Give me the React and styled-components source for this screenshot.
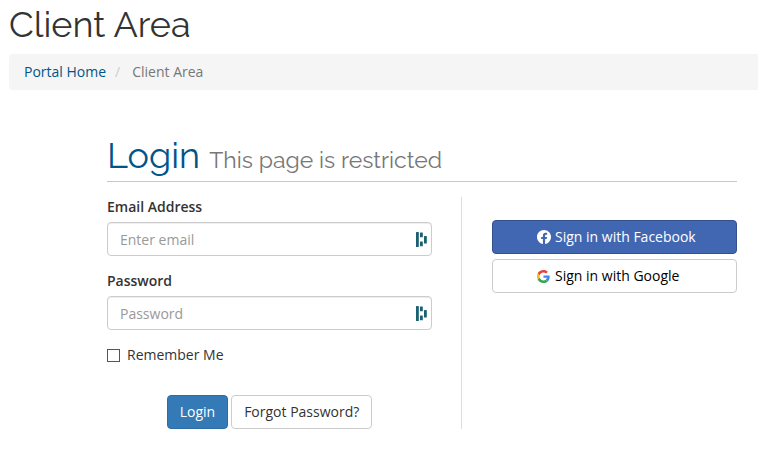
import React, { useState } from 'react';
import styled, { createGlobalStyle, css } from 'styled-components';

const GlobalStyle = createGlobalStyle`
  * {
    box-sizing: border-box;
  }

  body {
    margin: 0;
    background: #fff;
    color: #333;
    font-family: 'Open Sans', 'Noto Sans', sans-serif;
    font-size: 14px;
    line-height: 20px;
  }
`;

const Page = styled.div`
  padding: 4px 0 20px 9px;
`;

const headingFont = css`
  margin: 0;
  font-family: Raleway, Lato, sans-serif;
  font-size: 36px;
  font-weight: 400;
  line-height: 40px;
`;

const PageTitle = styled.h1`
  ${headingFont}
  margin-bottom: 10px;
`;

const Breadcrumb = styled.ol`
  display: flex;
  margin: 0;
  padding: 8px 15px;
  list-style: none;
  background: #f5f5f5;
  border-radius: 4px 0 0 4px;
`;

const Crumb = styled.li`
  color: #777;

  & + &::before {
    content: '/';
    padding: 0 12px 0 9px;
    color: #ccc;
  }

  a {
    color: #058;
    text-decoration: none;
  }
`;

const Content = styled.main`
  margin: 45px 21px 0 98px;
`;

const LoginHeader = styled.header`
  padding-bottom: 6px;
  margin-bottom: 15px;
  border-bottom: 1px solid #c8c8c8;
`;

const LoginTitle = styled.h2`
  ${headingFont}
  color: #058;

  small {
    color: #777;
    font-size: 23px;
    line-height: 23px;
  }
`;

const Columns = styled.div`
  display: flex;
`;

const Form = styled.form`
  flex: 1;
  padding-right: 29px;
  border-right: 1px solid #ddd;
`;

const FormGroup = styled.div`
  margin-bottom: 15px;
`;

const Label = styled.label`
  display: block;
  margin-bottom: 5px;
  font-weight: 600;
`;

const InputGroup = styled.div`
  display: flex;
  align-items: center;
  height: 34px;
  padding-right: 4px;
  border: 1px solid #ccc;
  border-radius: 4px;
  box-shadow: inset 0 1px 1px rgba(0, 0, 0, 0.075);

  &:focus-within {
    border-color: #66afe9;
  }
`;

const Input = styled.input`
  flex: 1;
  min-width: 0;
  padding: 7px 12px 5px;
  border: none;
  outline: none;
  background: transparent;
  color: #555;
  font: inherit;

  &::placeholder {
    color: #999;
    opacity: 1;
  }
`;

const CheckboxLabel = styled.label`
  display: flex;
  align-items: center;
  gap: 7px;
  width: fit-content;
`;

const Checkbox = styled.input`
  appearance: none;
  width: 13px;
  height: 13px;
  margin: 0;
  border: 1px solid #555;
  background: #fff;

  &:checked {
    background: #337ab7;
  }
`;

const Actions = styled.div`
  display: flex;
  justify-content: center;
  gap: 3px;
  margin-top: 30px;
`;

const buttonColors = {
  primary: css`
    color: #fff;
    background: #337ab7;
    border-color: #2e6da4;
  `,
  facebook: css`
    color: #fff;
    background: #4267b2;
    border-color: #34518d;
  `,
  plain: css`
    color: #333;
    background: #fff;
    border-color: #ccc;
  `
};

const buttonBase = css`
  padding: 6px 12px;
  border: 1px solid;
  border-radius: 4px;
  font: inherit;
  text-decoration: none;
  cursor: pointer;
  ${({ $variant }) => buttonColors[$variant]}
`;

const Button = styled.button`
  ${buttonBase}
`;

const LinkButton = styled.a`
  ${buttonBase}
`;

const Social = styled.aside`
  display: flex;
  flex-direction: column;
  gap: 5px;
  width: 275px;
  padding: 23px 0 0 30px;
`;

const SocialButton = styled.button`
  ${buttonBase}
  display: flex;
  align-items: center;
  gap: 4px;
  padding-left: 44px;
  color: ${({ $variant }) => ($variant === 'facebook' ? '#fff' : '#000')};
`;

const ManagerIcon = () => (
  <svg width="11" height="15" viewBox="0 0 11 15" fill="#1b6070" aria-hidden="true">
    <rect x="0" y="0" width="2.8" height="15" rx="0.5" />
    <rect x="4" y="0.4" width="2.8" height="4.8" rx="0.5" />
    <rect x="4" y="9.4" width="2.8" height="4.8" rx="0.5" />
    <rect x="8" y="4" width="2.8" height="7.4" rx="0.5" />
  </svg>
);

const FacebookIcon = () => (
  <svg width="14" height="14" viewBox="0 0 24 24" fill="#fff" aria-hidden="true">
    <path d="M24 12.07C24 5.4 18.63 0 12 0S0 5.4 0 12.07C0 18.1 4.39 23.1 10.13 24v-8.44H7.08v-3.49h3.05V9.41c0-3.02 1.79-4.69 4.53-4.69 1.31 0 2.68.24 2.68.24v2.97h-1.51c-1.49 0-1.96.93-1.96 1.89v2.25h3.33l-.53 3.49h-2.8V24C19.61 23.1 24 18.1 24 12.07z" />
  </svg>
);

const GoogleIcon = () => (
  <svg width="14" height="13" viewBox="1 0 50 48" aria-hidden="true">
    <path fill="#EA4335" d="M24 9.5c3.54 0 6.71 1.22 9.21 3.6l6.85-6.85C35.9 2.38 30.47 0 24 0 14.62 0 6.51 5.38 2.56 13.22l7.98 6.19C12.43 13.72 17.74 9.5 24 9.5z" />
    <path fill="#4285F4" d="M46.98 24.55c0-1.57-.15-3.09-.38-4.55H24v9.02h12.94c-.58 2.96-2.26 5.48-4.78 7.18l7.73 6c4.51-4.18 7.09-10.36 7.09-17.65z" />
    <path fill="#FBBC05" d="M10.53 28.59c-.48-1.45-.76-2.99-.76-4.59s.27-3.14.76-4.59l-7.98-6.19C.92 16.46 0 20.12 0 24s.92 7.54 2.56 10.78l7.97-6.19z" />
    <path fill="#34A853" d="M24 48c6.48 0 11.93-2.13 15.89-5.81l-7.73-6c-2.15 1.45-4.92 2.3-8.16 2.3-6.26 0-11.57-4.22-13.47-9.91l-7.98 6.19C6.51 42.62 14.62 48 24 48z" />
  </svg>
);

const App = () => {
  const [formData, setFormData] = useState({
    email: '',
    password: '',
    remember: false
  });

  const handleChange = (e) => {
    const { name, type, checked, value } = e.target;
    setFormData({ ...formData, [name]: type === 'checkbox' ? checked : value });
  };

  const handleSubmit = (e) => {
    e.preventDefault();
  };

  return (
    <Page>
      <GlobalStyle />
      <PageTitle>Client Area</PageTitle>
      <Breadcrumb>
        <Crumb><a href="#home">Portal Home</a></Crumb>
        <Crumb>Client Area</Crumb>
      </Breadcrumb>

      <Content>
        <LoginHeader>
          <LoginTitle>
            Login <small>This page is restricted</small>
          </LoginTitle>
        </LoginHeader>

        <Columns>
          <Form onSubmit={handleSubmit}>
            <FormGroup>
              <Label htmlFor="email">Email Address</Label>
              <InputGroup>
                <Input
                  type="email"
                  id="email"
                  name="email"
                  placeholder="Enter email"
                  value={formData.email}
                  onChange={handleChange}
                />
                <ManagerIcon />
              </InputGroup>
            </FormGroup>

            <FormGroup>
              <Label htmlFor="password">Password</Label>
              <InputGroup>
                <Input
                  type="password"
                  id="password"
                  name="password"
                  placeholder="Password"
                  value={formData.password}
                  onChange={handleChange}
                />
                <ManagerIcon />
              </InputGroup>
            </FormGroup>

            <CheckboxLabel htmlFor="remember">
              <Checkbox
                type="checkbox"
                id="remember"
                name="remember"
                checked={formData.remember}
                onChange={handleChange}
              />
              Remember Me
            </CheckboxLabel>

            <Actions>
              <Button type="submit" $variant="primary">Login</Button>
              <LinkButton href="#forgot" $variant="plain">Forgot Password?</LinkButton>
            </Actions>
          </Form>

          <Social>
            <SocialButton type="button" $variant="facebook">
              <FacebookIcon />
              Sign in with Facebook
            </SocialButton>
            <SocialButton type="button" $variant="plain">
              <GoogleIcon />
              Sign in with Google
            </SocialButton>
          </Social>
        </Columns>
      </Content>
    </Page>
  );
};

export default App;
